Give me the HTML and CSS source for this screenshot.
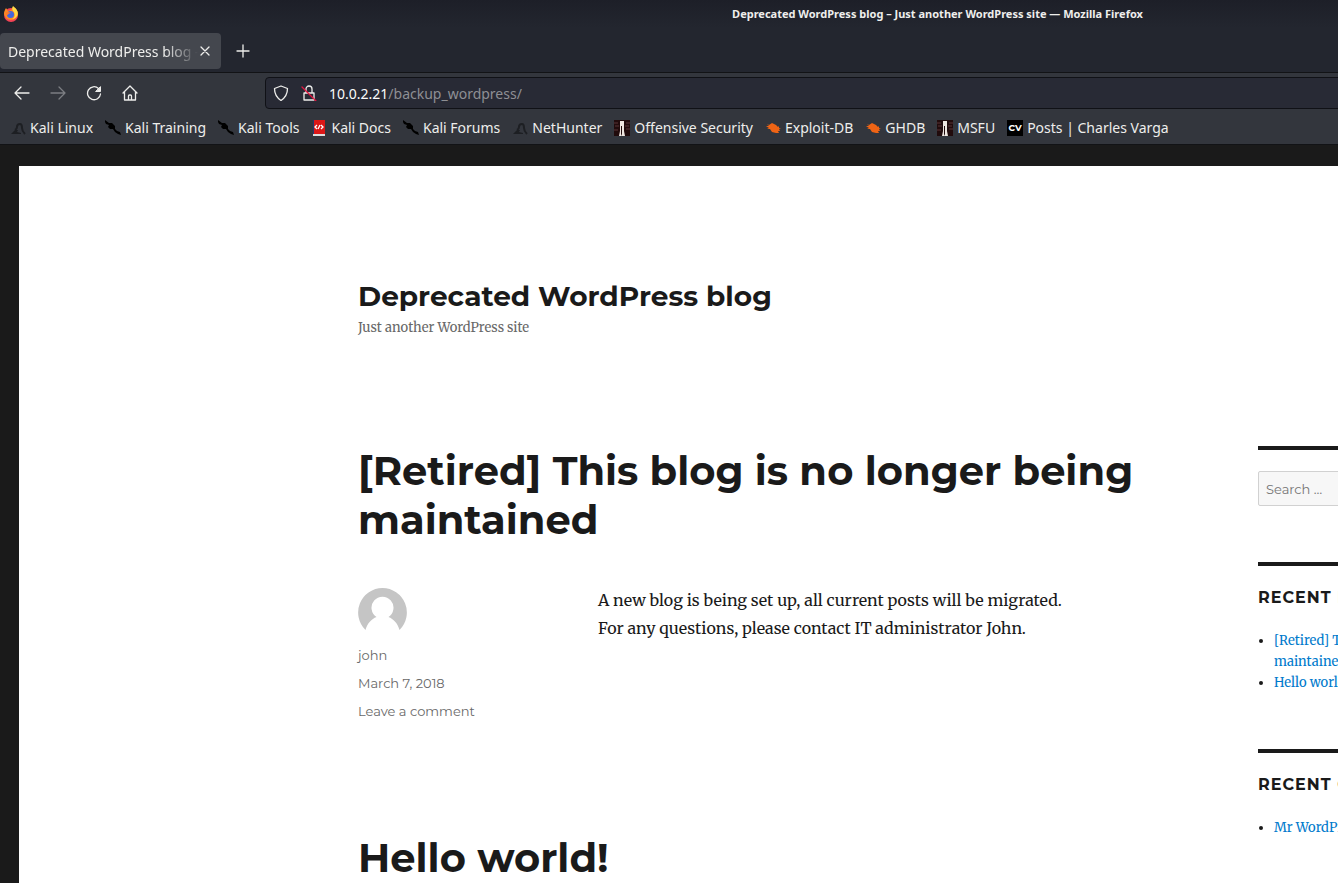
FILE: index.html
```html
<!DOCTYPE html>
<html lang="en">
<head>
<meta charset="utf-8">
<title>Deprecated WordPress blog – Just another WordPress site</title>
<link rel="stylesheet" href="styles.css">
</head>
<body>
<svg class="sprite" aria-hidden="true">
  <symbol id="dragon" viewBox="0 0 16 16"><path fill="none" stroke="currentColor" stroke-width="2" d="M5 10c2-1 2-2 2-3 0-2 1-3 3-3 2 0 2 2 2 4 0 2 1 4 3 6"/><path d="M1 14l4-4 3 0-1 2 4 1v1z"/></symbol>
  <symbol id="blade" viewBox="0 0 16 16"><path d="M0 0l4 3 3 0 3 3 0 3 2 2 3 1 1 3-3-1-3-2-2-3-3 0-2-2 1-2-3-1-1-2z"/></symbol>
  <symbol id="tower" viewBox="0 0 16 16"><path fill="#210b0c" d="M0 0h16v16H0z"/><path stroke="#5b3537" stroke-width="1" d="M0 3h4M12 3h4M1 6h4M11 6h4M0 10h4M12 9h4"/><path fill="#eee5df" d="M6 1h4v10l1 5H8V6H7v8l1 2H5l1-5z"/></symbol>
  <symbol id="bug" viewBox="0 0 16 16"><path fill="#ef6415" d="M4 5l3-2 4 2 2 2 1-1 0 2 2 1-2 0 1 2-2 0 1 2-3 0-4-1-2-3-3 0 2-1-3-2 3 0-2-2z"/></symbol>
</svg>
<div class="window">
  <header class="chrome">
    <div class="titlebar">
      <svg class="firefox" viewBox="0 0 16 16"><circle cx="8" cy="9" r="7" fill="#f44355"/><path fill="#ff8a22" d="M1 8c0-3 1-4 2-6l2 3 3-1 2-3c4 2 5 5 5 8-1 3-4 5-7 5-4 0-6-3-7-6z"/><path fill="#ffda47" d="M10 0c4 3 6 6 4 10-1 2-3 3-5 3 4-2 3-6 1-8-1-2-1-3 0-5z"/><circle cx="7.500" cy="8.500" r="3.500" fill="#4367df"/><path fill="#ff7b2b" d="M3 6c2 0 4 0 5 1-2 0-3 1-3 2-2 0-3-1-2-3z"/></svg>
      <span class="window-title">Deprecated WordPress blog – Just another WordPress site — Mozilla Firefox</span>
    </div>
    <div class="tabs">
      <div class="tab"><span class="tab-label">Deprecated WordPress blog – Just another</span><button class="close" aria-label="Close tab"><svg viewBox="0 0 10 10"><path d="M1 1l8 8M9 1L1 9"/></svg></button></div>
      <button class="new-tab" aria-label="New tab"><svg viewBox="0 0 14 14"><path d="M7 1v12M1 7h12"/></svg></button>
    </div>
    <div class="toolbar">
      <nav class="nav-buttons" aria-label="Browser navigation">
        <button aria-label="Back"><svg viewBox="0 0 16 16"><path d="M15 8H1M7 2L1 8l6 6"/></svg></button>
        <button aria-label="Forward" disabled><svg viewBox="0 0 16 16"><path d="M1 8h14M9 2l6 6-6 6"/></svg></button>
        <button aria-label="Reload"><svg viewBox="0 0 16 16"><path d="M12.500 3.500A6.500 6.500 0 1 0 14.500 9"/><path class="solid" d="M14.500 2v4.500H10z"/></svg></button>
        <button aria-label="Home"><svg viewBox="0 0 16 16"><path d="M1 8l7-7 7 7M2.500 7v8h11V7M6.500 15v-4q0-1 1-1h1q1 0 1 1v4"/></svg></button>
      </nav>
      <div class="urlbar">
        <svg viewBox="0 0 16 16"><path d="M8 1l6.500 2.500c0 6-2 9-6.500 12-4.500-3-6.500-6-6.500-12z"/></svg>
        <svg viewBox="0 0 16 16"><path d="M3 8h10v7H3zM5 8V4a3 3 0 0 1 6 0v4"/><path class="slash" d="M1 2l14 14"/></svg>
        <a class="url" href="#"><span class="host">10.0.2.21</span>/backup_wordpress/</a>
      </div>
    </div>
    <nav class="bookmarks" aria-label="Bookmarks">
      <a href="#"><svg class="dim"><use href="#dragon"/></svg>Kali Linux</a>
      <a href="#"><svg><use href="#blade"/></svg>Kali Training</a>
      <a href="#"><svg><use href="#blade"/></svg>Kali Tools</a>
      <a href="#"><svg viewBox="0 0 16 16"><path fill="#dc1717" d="M2 0h12v14H2z"/><path fill="#27366f" d="M2 0h1v14H2z"/><path fill="#ddd" d="M2 14h12v2H2z"/><path fill="none" stroke="#fff" stroke-width="1.300" d="M6 5L4 7l2 2M10 5l2 2-2 2M9 5L7 9"/></svg>Kali Docs</a>
      <a href="#"><svg><use href="#blade"/></svg>Kali Forums</a>
      <a href="#"><svg class="dim"><use href="#dragon"/></svg>NetHunter</a>
      <a href="#"><svg><use href="#tower"/></svg>Offensive Security</a>
      <a href="#"><svg><use href="#bug"/></svg>Exploit-DB</a>
      <a href="#"><svg><use href="#bug"/></svg>GHDB</a>
      <a href="#"><svg><use href="#tower"/></svg>MSFU</a>
      <a href="#"><span class="cv">CV</span>Posts | Charles Varga</a>
    </nav>
  </header>
  <div class="viewport">
    <div class="site">
      <div class="site-inner">
        <header class="masthead">
          <p class="site-title">Deprecated WordPress blog</p>
          <p class="tagline">Just another WordPress site</p>
        </header>
        <div class="columns">
          <main>
            <article>
              <h1>[Retired] This blog is no longer being maintained</h1>
              <div class="entry">
                <footer class="meta">
                  <svg class="avatar" viewBox="0 0 49 49"><path fill="#c5c5c5" d="M24.500 0a24.500 24.500 0 0 1 17 42c-2-7-6-11-11-13a11 11 0 1 0-12 0c-5 2-9 6-11 13a24.500 24.500 0 0 1 17-42z"/></svg>
                  <a href="#">john</a>
                  <a href="#">March 7, 2018</a>
                  <a href="#">Leave a comment</a>
                </footer>
                <p class="copy">A new blog is being set up, all current posts will be migrated.<br>For any questions, please contact IT administrator John.</p>
              </div>
            </article>
            <article>
              <h1>Hello world!</h1>
            </article>
          </main>
          <aside>
            <section class="search"><input type="search" placeholder="Search …" aria-label="Search"></section>
            <section>
              <h2>Recent Posts</h2>
              <ul>
                <li><a href="#">[Retired] This blog is no longer being maintained</a></li>
                <li><a href="#">Hello world!</a></li>
              </ul>
            </section>
            <section>
              <h2>Recent Comments</h2>
              <ul>
                <li><a href="#">Mr WordPress</a> on <a href="#">Hello world!</a></li>
              </ul>
            </section>
          </aside>
        </div>
      </div>
    </div>
  </div>
</div>
</body>
</html>
```
FILE: styles.css
```css
* { box-sizing: border-box; }
body { margin: 0; height: 100vh; overflow: hidden; background: #1a1a1a; color: #1a1a1a; font-family: Montserrat, Inter, sans-serif; }
button { border: 0; padding: 0; background: none; color: inherit; font: inherit; display: grid; place-items: center; }
a { color: inherit; text-decoration: none; }
p, h1, h2, ul { margin: 0; padding: 0; }
.sprite { display: none; }
.window { min-width: 1916px; min-height: 100%; }

.chrome { background: #33363d; color: #eeeeec; font-family: "Noto Sans", sans-serif; font-size: 14px; border-bottom: 1px solid #121316; }
.titlebar { display: flex; align-items: center; height: 28px; padding: 0 60px 0 3px; background: linear-gradient(#1d1f28, #23262f); }
.firefox { width: 16px; height: 16px; }
.window-title { flex: 1; padding-bottom: 2px; text-align: center; font-size: 11px; font-weight: 700; }
.tabs { display: flex; align-items: center; gap: 15px; height: 45px; padding-top: 2px; background: #23262f; border-bottom: 1px solid #121316; }
.tab { display: flex; align-items: center; gap: 2px; width: 221px; height: 36px; padding: 0 11px 0 8px; border-radius: 4px; background: #44474e; }
.tab-label { flex: 1; overflow: hidden; white-space: nowrap; mask-image: linear-gradient(to right, #000 82%, transparent); }
.close svg { width: 10px; height: 10px; }
.new-tab svg { width: 14px; height: 14px; }
.chrome button svg, .urlbar svg { fill: none; stroke: currentColor; stroke-width: 1.3; stroke-linecap: round; stroke-linejoin: round; }
.toolbar { display: flex; align-items: center; height: 40px; }
.nav-buttons { display: flex; gap: 20px; width: 265px; padding-left: 14px; }
.nav-buttons svg, .urlbar svg { display: block; width: 16px; height: 16px; }
.nav-buttons button:disabled { color: #7c7e83; }
.chrome .solid { fill: currentColor; stroke-width: 1; }
.urlbar { flex: 1; display: flex; align-items: center; gap: 12px; height: 32px; padding-left: 7px; background: #282a35; border: 1px solid #101116; border-radius: 4px; }
.urlbar .slash { stroke: #e3153f; }
.url { color: #8e8f94; }
.host { color: #fbfbfb; }
.bookmarks { display: flex; align-items: center; gap: 12px; height: 31px; padding: 0 0 2px 10px; }
.bookmarks a { display: flex; align-items: center; gap: 4px; white-space: nowrap; }
.bookmarks svg { width: 16px; height: 16px; }
.bookmarks .dim { color: #1d1f23; fill: #1d1f23; }
.cv { width: 16px; height: 16px; background: #000; color: #fff; font: 700 9px/16px Montserrat, sans-serif; text-align: center; }

.viewport { padding: 21px 19px 0; background: #1a1a1a; }
.site { min-height: 900px; background: #fff; }
.site-inner { width: 1200px; margin: 0 auto; padding-top: 112px; }
.masthead { padding-bottom: 105px; }
.site-title { font-size: 28px; line-height: 37px; font-weight: 700; }
.tagline { color: #686868; font-family: Merriweather, "DejaVu Serif", serif; font-size: 13px; line-height: 26px; }
.columns { display: grid; grid-template-columns: 840px 300px; gap: 60px; }
h1 { font-size: 40px; line-height: 49px; font-weight: 700; }
article { padding-bottom: 108px; }
.entry { display: grid; grid-template-columns: 240px 1fr; margin-top: 42px; }
.meta { display: flex; flex-direction: column; padding-top: 2px; color: #686868; font-size: 13px; line-height: 28px; }
.avatar { width: 49px; height: 49px; margin-bottom: 4px; }
.copy { font-family: Merriweather, "DejaVu Serif", serif; font-size: 16px; line-height: 28px; }
aside section { border-top: 4px solid #1a1a1a; padding-top: 21px; margin-bottom: 56px; }
.search input { display: block; width: 100%; height: 35px; padding: 0 7px; background: #f7f7f7; border: 1px solid #d1d1d1; border-radius: 2px; font: 13px Montserrat, Inter, sans-serif; }
.search input::placeholder { color: #757575; }
h2 { font-size: 16px; line-height: 21px; letter-spacing: 1px; text-transform: uppercase; margin-bottom: 22px; }
ul { padding-left: 16px; font-family: Merriweather, "DejaVu Serif", serif; font-size: 13px; line-height: 21px; }
li a { color: #007acc; }
```
